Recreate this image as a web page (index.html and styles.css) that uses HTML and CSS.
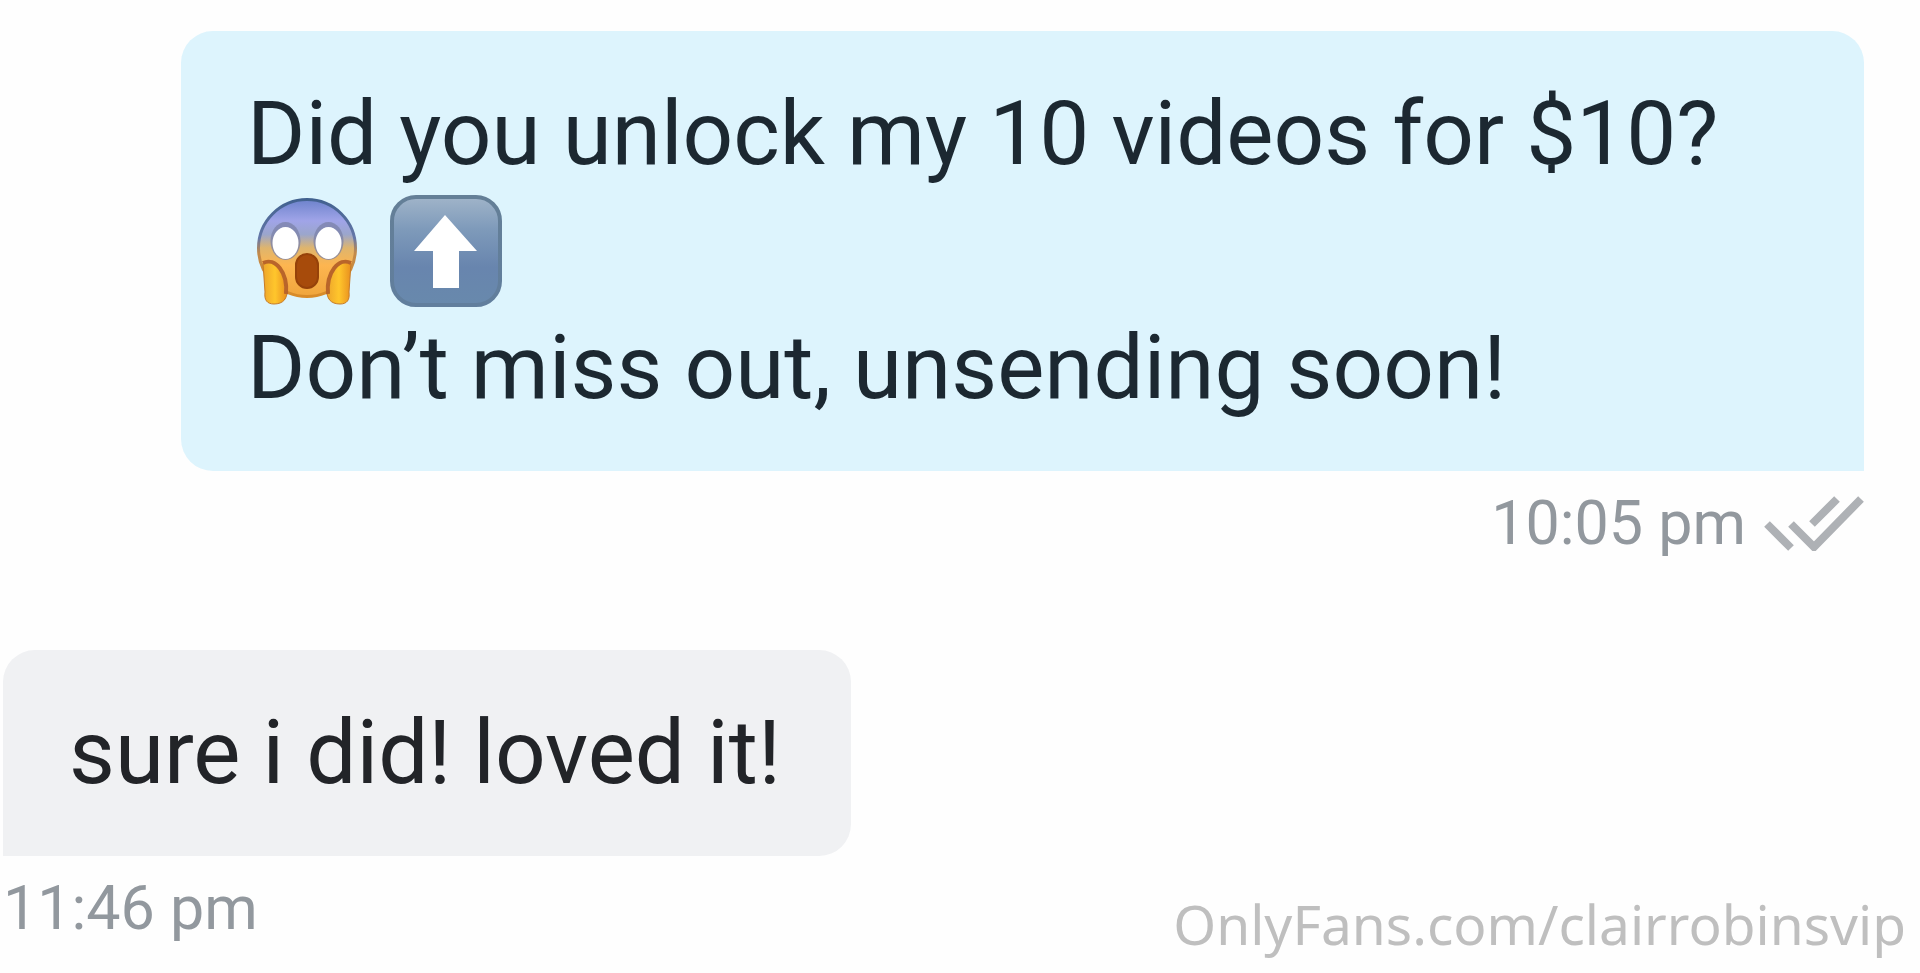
FILE: index.html
```
<!DOCTYPE html>
<html lang="en">
<head>
<meta charset="utf-8">
<title>Messages</title>
<link rel="stylesheet" href="styles.css">
</head>
<body>
<main class="chat">
  <article class="message message--sent">
    <div class="bubble">
      <p class="line">Did you unlock my 10 videos for $10?</p>
      <p class="line line--emoji">
        <svg class="emoji" viewBox="0 0 112 112" role="img" aria-label="Face screaming in fear">
          <defs>
            <linearGradient id="face" x1="0" y1="0" x2="0" y2="1">
              <stop offset="0" stop-color="#6d83cc"/>
              <stop offset=".22" stop-color="#a0a4e8"/>
              <stop offset=".36" stop-color="#9ba6cc"/>
              <stop offset=".5" stop-color="#dfb56d"/>
              <stop offset=".68" stop-color="#fdb550"/>
              <stop offset="1" stop-color="#f0a53c"/>
            </linearGradient>
            <linearGradient id="rim" x1="0" y1="0" x2="0" y2="1">
              <stop offset="0" stop-color="#41618f"/>
              <stop offset=".4" stop-color="#6577a8"/>
              <stop offset=".55" stop-color="#c28a4b"/>
              <stop offset="1" stop-color="#d98b28"/>
            </linearGradient>
            <linearGradient id="hand" x1="0" y1="0" x2="1" y2="0">
              <stop offset="0" stop-color="#eda52b"/>
              <stop offset=".5" stop-color="#ffc62c"/>
              <stop offset="1" stop-color="#e98f1e"/>
            </linearGradient>
          </defs>
          <circle cx="56" cy="53" r="48.500" fill="url(#face)" stroke="url(#rim)" stroke-width="3"/>
          <ellipse cx="34.500" cy="46" rx="15" ry="19" fill="#7b82a8" opacity=".75"/>
          <ellipse cx="77.500" cy="46" rx="15" ry="19" fill="#7b82a8" opacity=".75"/>
          <ellipse cx="34.500" cy="48" rx="13" ry="16" fill="#fff"/>
          <ellipse cx="77.500" cy="48" rx="13" ry="16" fill="#fff"/>
          <rect x="45" y="59" width="22" height="34" rx="11" fill="#a74b0b" stroke="#964209" stroke-width="2"/>
          <path d="M12 68C24 63 36 77 36 93C37 104 32 109 23 109C16 109 13 105 14 97Z" fill="url(#hand)" stroke="#c77b27" stroke-width="1"/>
          <path d="M12 68C24 62 37 77 35 99" fill="none" stroke="#b9652a" stroke-width="4"/>
          <path d="M100 68C88 63 76 77 76 93C75 104 80 109 89 109C96 109 99 105 98 97Z" fill="url(#hand)" stroke="#c77b27" stroke-width="1"/>
          <path d="M100 68C88 62 75 77 77 99" fill="none" stroke="#b9652a" stroke-width="4"/>
        </svg>
        <svg class="emoji" viewBox="0 0 112 112" role="img" aria-label="Up arrow">
          <defs>
            <linearGradient id="key" x1="0" y1="0" x2="0" y2="1">
              <stop offset="0" stop-color="#a0b4c9"/>
              <stop offset=".3" stop-color="#7e9aba"/>
              <stop offset=".65" stop-color="#6885ae"/>
              <stop offset="1" stop-color="#6889ac"/>
            </linearGradient>
            <linearGradient id="keyrim" x1="0" y1="0" x2="0" y2="1">
              <stop offset="0" stop-color="#647f97"/>
              <stop offset="1" stop-color="#617e9d"/>
            </linearGradient>
          </defs>
          <rect x="2" y="2" width="108" height="108" rx="24" fill="url(#key)" stroke="url(#keyrim)" stroke-width="4"/>
          <path d="M55 20L87 56H69V93H43V56H24Z" fill="#fff"/>
        </svg>
      </p>
      <p class="line">Don’t miss out, unsending soon!</p>
    </div>
    <footer class="meta">
      <time datetime="22:05">10:05 pm</time>
      <svg class="ticks" viewBox="0 0 100 56" role="img" aria-label="Read">
        <path d="M3 29L27 53M27 29L50 52L97 4M48 29L73 4" fill="none" stroke="#aeb1b5" stroke-width="8"/>
      </svg>
    </footer>
  </article>
  <article class="message message--received">
    <div class="bubble">
      <p class="line">sure i did! loved it!</p>
    </div>
    <footer class="meta">
      <time datetime="23:46">11:46 pm</time>
    </footer>
  </article>
</main>
<div class="watermark">OnlyFans.com/clairrobinsvip</div>
</body>
</html>
```
FILE: styles.css
```
body {
  margin: 0;
  background: #fefefe;
  font-family: Roboto, "Liberation Sans", sans-serif;
}

.chat {
  display: flex;
  flex-direction: column;
  gap: 91px;
  padding: 31px 56px 30px 3px;
}

.message {
  display: flex;
  flex-direction: column;
  gap: 16px;
  max-width: 1683px;
}

.message--sent {
  align-self: flex-end;
  align-items: flex-end;
  width: 100%;
}

.message--received {
  align-self: flex-start;
  align-items: flex-start;
}

.bubble {
  box-sizing: border-box;
  padding: 44px 70px 45px 66px;
  border-radius: 32px;
  font-size: 89px;
  line-height: 117px;
}

.message--sent .bubble {
  width: 100%;
  border-bottom-right-radius: 0;
  background: #ddf4fd;
  color: #1c2831;
}

.message--received .bubble {
  border-bottom-left-radius: 0;
  background: #f0f1f3;
  color: #222428;
}

.line {
  margin: 0;
}

.line--emoji {
  display: flex;
  align-items: center;
  gap: 27px;
  height: 117px;
  padding-left: 4px;
}

.emoji {
  width: 112px;
  height: 112px;
}

.meta {
  display: flex;
  align-items: center;
  gap: 18px;
  color: #92989e;
  font-size: 61px;
  line-height: 72px;
}

.ticks {
  width: 100px;
  height: 56px;
}

.watermark {
  position: fixed;
  right: 14px;
  bottom: 12px;
  color: #bfbfbf;
  font-family: "Noto Sans", "Open Sans", sans-serif;
  font-size: 55px;
  line-height: 74px;
}
```
